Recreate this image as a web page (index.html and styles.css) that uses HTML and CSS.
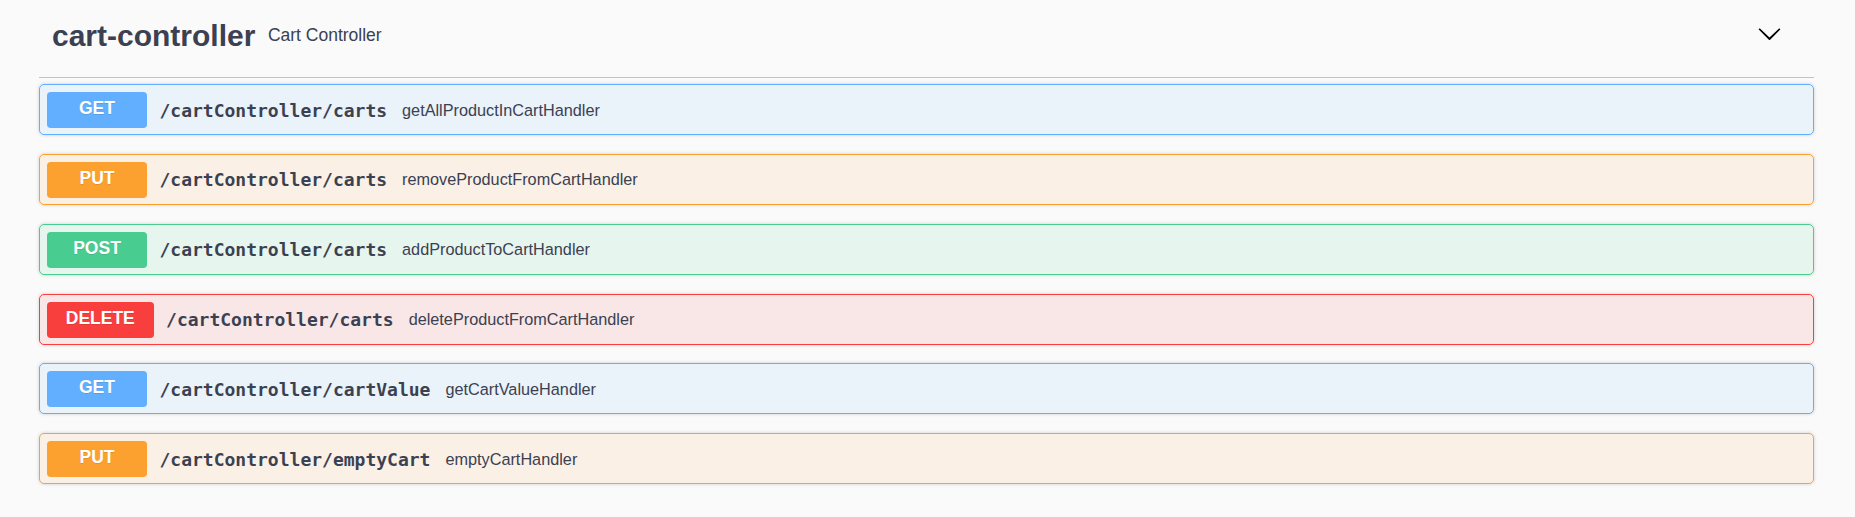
FILE: index.html
```html
<!DOCTYPE html>
<html lang="en">
<head>
<meta charset="utf-8">
<title>cart-controller</title>
<link rel="stylesheet" href="styles.css">
</head>
<body>
<div class="wrapper">
  <section class="tag-section">
    <h3 class="tag-header">
      <span class="tag-name">cart-controller</span>
      <small class="tag-desc">Cart Controller</small>
      <button class="expand" aria-label="Collapse operation">
        <svg width="25" height="25" viewBox="0 0 20 20" aria-hidden="true"><path d="M17.418 6.109c.272-.268.709-.268.979 0s.271.701 0 .969l-7.908 7.83c-.27.268-.707.268-.979 0l-7.908-7.83c-.27-.268-.27-.701 0-.969.271-.268.709-.268.979 0L10 13.25l7.418-7.141z"/></svg>
      </button>
    </h3>
    <div class="ops">
      <div class="opblock get">
        <div class="summary"><span class="method">GET</span><span class="path">/cartController/carts</span><span class="desc">getAllProductInCartHandler</span></div>
      </div>
      <div class="opblock put">
        <div class="summary"><span class="method">PUT</span><span class="path">/cartController/carts</span><span class="desc">removeProductFromCartHandler</span></div>
      </div>
      <div class="opblock post">
        <div class="summary"><span class="method">POST</span><span class="path">/cartController/carts</span><span class="desc">addProductToCartHandler</span></div>
      </div>
      <div class="opblock delete">
        <div class="summary"><span class="method">DELETE</span><span class="path">/cartController/carts</span><span class="desc">deleteProductFromCartHandler</span></div>
      </div>
      <div class="opblock get">
        <div class="summary"><span class="method">GET</span><span class="path">/cartController/cartValue</span><span class="desc">getCartValueHandler</span></div>
      </div>
      <div class="opblock put">
        <div class="summary"><span class="method">PUT</span><span class="path">/cartController/emptyCart</span><span class="desc">emptyCartHandler</span></div>
      </div>
    </div>
  </section>
</div>
</body>
</html>
```
FILE: styles.css
```css
html, body {
  margin: 0;
  background: #fafafa;
}

body {
  font-family: "Liberation Sans", Arial, sans-serif;
  color: #3b4151;
}

.wrapper {
  padding: 0 41px 0 39px;
}

.tag-header {
  display: flex;
  align-items: center;
  margin: 0 0 6px;
  padding: 18px 32px 24px 13px;
  border-bottom: 1px solid rgba(59, 65, 81, 0.3);
  font-weight: normal;
}

.tag-name {
  font-size: 30px;
  line-height: 35px;
  font-weight: 700;
}

.tag-desc {
  flex: 1;
  font-size: 17.5px;
  padding: 0 12.5px;
}

.expand {
  display: flex;
  width: 25px;
  height: 25px;
  margin: 0 0 5px;
  padding: 0;
  border: none;
  background: none;
}

.expand svg {
  fill: #000;
}

.opblock {
  border: 1px solid;
  border-radius: 5px;
  box-shadow: 0 0 3.75px rgba(0, 0, 0, 0.19);
  margin-bottom: 18.85px;
}

.summary {
  display: flex;
  align-items: center;
  padding: 7px 7px 6px;
}

.method {
  box-sizing: border-box;
  min-width: 100px;
  height: 36px;
  padding: 0 18.75px 3px;
  line-height: 33px;
  text-align: center;
  font-size: 17.5px;
  font-weight: 700;
  color: #fff;
  border-radius: 3.75px;
  text-shadow: 0 1px 0 rgba(0, 0, 0, 0.1);
}

.path {
  font-family: "DejaVu Sans Mono", "Liberation Mono", monospace;
  font-size: 18px;
  font-weight: 700;
  padding: 0 15px 0 12.5px;
}

.desc {
  font-size: 16.25px;
}

.get { border-color: #61affe; background: rgba(97, 175, 254, 0.1); }
.get .method { background: #61affe; }

.put { border-color: #fca130; background: rgba(252, 161, 48, 0.1); }
.put .method { background: #fca130; }

.post { border-color: #49cc90; background: rgba(73, 204, 144, 0.1); }
.post .method { background: #49cc90; }

.delete { border-color: #f93e3e; background: rgba(249, 62, 62, 0.1); }
.delete .method { background: #f93e3e; }
```
